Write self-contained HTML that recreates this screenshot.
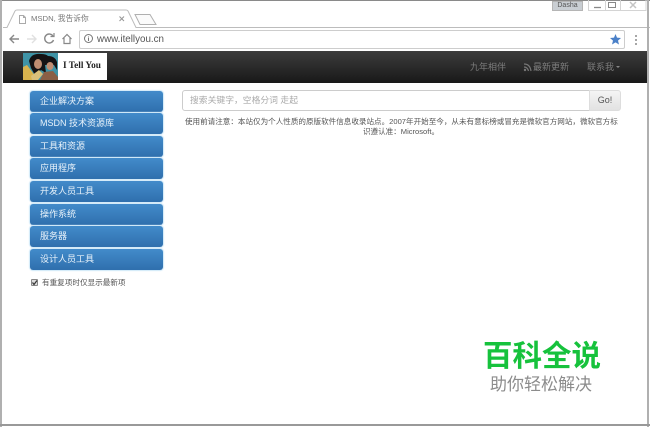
<!DOCTYPE html>
<html><head><meta charset="utf-8">
<style>
html,body{margin:0;padding:0;background:#fff}
#p{position:relative;width:650px;height:427px;overflow:hidden;background:#fff;font-family:"Liberation Sans","Noto Sans CJK SC",sans-serif;filter:blur(.3px)}
#p div,#p span{position:absolute;white-space:nowrap}
.b{left:30px;width:133px;height:21px;border-radius:3px;background:linear-gradient(#428bca,#2f6fad);box-shadow:0 0 1px 1px #cfe8f8;color:#e8f2fa;font-size:9px;line-height:21px;text-indent:10px}
.n{color:#7c7c7c;font-size:9px;top:62px;line-height:11px}
</style></head><body>
<div id="p">
<div style="left:0;top:0;width:650px;height:1px;background:#8a8a8a"></div>
<svg style="position:absolute;left:0;top:0" width="650" height="30"><path d="M3 27.500H7L15 11Q15.500 10 17 10H126Q127.500 10 128 11L136 27.500H650" fill="#fff" stroke="#bcbcbc"/><path d="M135 14.500H150L156 24.500H140Z" fill="#fbfbfb" stroke="#b0b0b0"/><path d="M19.500 15.500h4l2 2v6h-6z M23.500 15.500v2h2" fill="none" stroke="#aaa"/><path d="M119.500 16.500l4.500 4.500M124 16.500l-4.500 4.500" stroke="#999" stroke-width="1.100"/></svg>
<div style="left:31px;top:13px;font-size:7.700px;line-height:11px;color:#777">MSDN, 我告诉你</div>
<div style="left:552px;top:1px;width:29px;height:8px;background:#c9ced3;border:1px solid #b5b5b5;font-size:7px;line-height:8px;text-align:center;color:#555">Dasha</div>
<svg style="position:absolute;left:586px;top:0" width="62" height="12"><path d="M2.500 0V10.500H60V0M19.500 0V10.500M34.500 0V10.500" fill="none" stroke="#d4d4d4"/><path d="M8 7.500H15" stroke="#888" stroke-width="1.300"/><rect x="22.500" y="2.500" width="7" height="5" fill="none" stroke="#888"/><path d="M44 2l6 6M50 2l-6 6" stroke="#c4c4c4" stroke-width="1.500"/></svg>
<svg style="position:absolute;left:0;top:28px" width="90" height="22"><path d="M19 11H10M14 7l-4 4 4 4" fill="none" stroke="#888" stroke-width="1.400"/><path d="M27 11H36M32 7l4 4-4 4" fill="none" stroke="#e0e0e0" stroke-width="1.400"/><path d="M53 8A4.500 4.500 0 1 0 53.500 12" fill="none" stroke="#888" stroke-width="1.400"/><path d="M50.500 8.500H54V5" fill="none" stroke="#888" stroke-width="1.200"/><path d="M62.500 11L67 6.500 71.500 11M64 10V15.500H70V10" fill="none" stroke="#888" stroke-width="1.200"/></svg>
<div style="left:79px;top:30px;width:544px;height:17px;border:1px solid #cdcdcd;border-radius:2px;background:#fff"></div>
<svg style="position:absolute;left:83px;top:33px" width="12" height="12"><circle cx="5.500" cy="5.500" r="4" fill="none" stroke="#777"/><path d="M5.500 3.500v1M5.500 5v3" stroke="#777"/></svg>
<div style="left:97px;top:34px;font-size:9.800px;line-height:12px;color:#555">www.itellyou.cn</div>
<svg style="position:absolute;left:609px;top:33px" width="13" height="12"><path d="M6.500 1L8 4.600 12 5 9 7.600 10 11.500 6.500 9.400 3 11.500 4 7.600 1 5 5 4.600Z" fill="#4a80c8"/></svg>
<svg style="position:absolute;left:634px;top:35px" width="4" height="10"><path d="M2 0v2M2 4v2M2 8v2" stroke="#888" stroke-width="1.500"/></svg>
<div style="left:3px;top:51px;width:644px;height:32px;background:linear-gradient(#3c3c3c,#181818)"></div>
<div style="left:23px;top:53px;width:84px;height:27px;background:#fff"></div>
<svg style="position:absolute;left:23px;top:53px" width="35" height="27"><rect width="35" height="27" fill="#3f93a6"/><path d="M0 14L4 12 10 20 14 27H0Z" fill="#d8b34e"/><path d="M6 8Q8 0 18 1 23 1 25 3 32 3 34 9L34 17 31 12 22 12 23 20 18 17 12 22 8 15Z" fill="#151214"/><ellipse cx="15" cy="11" rx="4" ry="5" fill="#c08d72"/><ellipse cx="27" cy="13" rx="3.500" ry="4" fill="#c08d72"/><path d="M17 27L21 19 30 18 35 24V27Z" fill="#8a5f45"/><path d="M8 23L16 17 20 21 15 27H9Z" fill="#d9c07a"/></svg>
<div style="left:63px;top:60px;font-family:'Liberation Serif',serif;font-weight:bold;font-size:9.300px;line-height:13px;color:#222">I Tell You</div>
<div class="n" style="left:470px">九年相伴</div>
<svg style="position:absolute;left:523px;top:63px" width="9" height="9"><path d="M1 1Q7 1 8 8M1 4Q4.500 4 5.500 8" fill="none" stroke="#777" stroke-width="1.200"/><circle cx="2" cy="7" r="1.200" fill="#777"/></svg>
<div class="n" style="left:533px">最新更新</div>
<div class="n" style="left:587px">联系我</div>
<div style="left:616px;top:66px;width:0;height:0;border:2.500px solid transparent;border-top-color:#888;border-bottom:0"></div>
<div class="b" style="top:91px">企业解决方案</div>
<div class="b" style="top:113px">MSDN 技术资源库</div>
<div class="b" style="top:136px">工具和资源</div>
<div class="b" style="top:158px">应用程序</div>
<div class="b" style="top:181px">开发人员工具</div>
<div class="b" style="top:204px">操作系统</div>
<div class="b" style="top:226px">服务器</div>
<div class="b" style="top:249px">设计人员工具</div>
<div style="left:31px;top:279px;width:5px;height:5px;background:#ddd;border:1px solid #888;border-radius:1px"></div>
<svg style="position:absolute;left:31px;top:279px" width="8" height="8"><path d="M1.500 3.500L3 5.500 6 1.500" fill="none" stroke="#333" stroke-width="1.200"/></svg>
<div style="left:42px;top:277px;font-size:7.600px;line-height:11px;color:#555">有重复项时仅显示最新项</div>
<div style="left:182px;top:90px;width:406px;height:19px;border:1px solid #ccc;border-radius:3px 0 0 3px;background:#fff"></div>
<div style="left:190px;top:94px;font-size:8.800px;line-height:12px;color:#aaa">搜索关键字，空格分词 走起</div>
<div style="left:589px;top:90px;width:30px;height:19px;border:1px solid #ddd;border-radius:0 3px 3px 0;background:linear-gradient(#f4f4f4,#e2e2e2);font-size:9px;line-height:19px;text-align:center;color:#555">Go!</div>
<div style="left:185px;top:116px;font-size:7.570px;line-height:11px;color:#555">使用前请注意：本站仅为个人性质的原版软件信息收录站点。2007年开始至今，从未有意标榜或冒充是微软官方网站，微软官方标</div>
<div style="left:182px;top:126px;width:438px;text-align:center;font-size:7.570px;line-height:11px;color:#555">识遵认准：Microsoft。</div>
<div style="left:483px;top:339px;font-size:29.500px;line-height:36px;font-weight:bold;color:#16c23c">百科全说</div>
<div style="left:490px;top:374px;font-size:17px;line-height:22px;color:#8c8c8c">助你轻松解决</div>
<div style="left:0;top:0;width:2px;height:427px;background:#b0b0b0"></div>
<div style="left:647px;top:0;width:2px;height:427px;background:#b0b0b0"></div>
<div style="left:0;top:424px;width:650px;height:2px;background:#999"></div>
</div>
</body></html>
